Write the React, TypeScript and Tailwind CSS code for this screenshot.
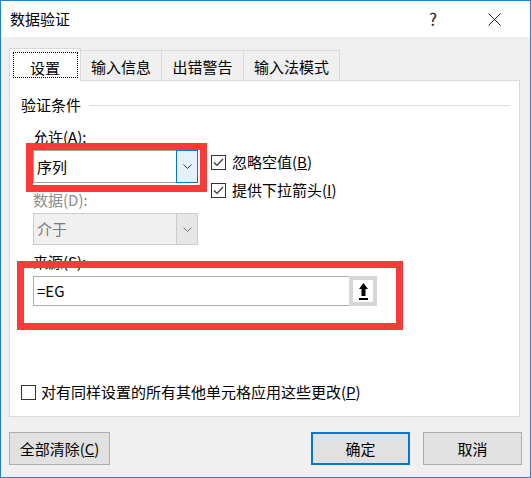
import React from "react"

const font = "font-['Noto_Sans_CJK_SC','Noto_Sans',sans-serif]"

function Check({ checked }: { checked: boolean }) {
  return (
    <span className="flex h-[15px] w-[15px] shrink-0 items-center justify-center border border-[#333333] bg-white">
      {checked && (
        <svg width="11" height="9" viewBox="0 0 11 9">
          <path d="M1 4.5 L4 7.5 L10 1" fill="none" stroke="#333333" strokeWidth="1.2" />
        </svg>
      )}
    </span>
  )
}

function Chevron({ color }: { color: string }) {
  return (
    <svg width="9" height="5" viewBox="0 0 9 5">
      <path d="M0.5 0.5 L4.5 4.5 L8.5 0.5" fill="none" stroke={color} strokeWidth="1" />
    </svg>
  )
}

export default function App() {
  return (
    <div className={`flex h-[478px] w-[531px] flex-col border border-[#1f84d6] bg-[#f0f0f0] text-[15px] leading-[20px] text-black ${font}`}>
      {/* title bar */}
      <div className="flex h-[36px] shrink-0 items-center bg-white pl-[9px]">
        <span>数据验证</span>
        <span className="ml-auto mr-[51px] text-[17px] text-[#222]">?</span>
        <svg className="mr-[29px]" width="13" height="13" viewBox="0 0 13 13">
          <path d="M0.5 0.5 L12.5 12.5 M12.5 0.5 L0.5 12.5" stroke="#222" strokeWidth="1" />
        </svg>
      </div>

      <div className="flex flex-1 flex-col pl-[8px] pt-[11px]">
        {/* tabs */}
        <div className="flex h-[32px] items-end">
          <div className="relative z-10 -mb-px flex h-[33px] w-[72px] items-center justify-center border-x border-t border-[#d9d9d9] bg-white pt-[5px]">
            <div className="absolute left-[3px] right-[2px] top-[3px] h-[26px] border border-dotted border-black" />
            设置
          </div>
          <div className="flex h-[30px] w-[81px] items-center justify-center border-r border-t border-[#d9d9d9] pt-[3px]">输入信息</div>
          <div className="flex h-[30px] w-[82px] items-center justify-center border-r border-t border-[#d9d9d9] pt-[3px]">出错警告</div>
          <div className="flex h-[30px] w-[96px] items-center justify-center border-r border-t border-[#d9d9d9] pt-[3px]">输入法模式</div>
        </div>

        {/* panel */}
        <div className="relative flex h-[337px] w-[511px] flex-col border border-[#d9d9d9] bg-white">
          <div className="mt-[14px] flex h-[20px] items-center pl-[11px] pr-[9px]">
            <span>验证条件</span>
            <div className="ml-[8px] h-px flex-1 bg-[#dcdcdc]" />
          </div>

          <div className="pl-[23px]">
            <div className="mt-[12px] h-[20px]">
              允许(<span className="underline">A</span>):
            </div>

            <div className="mt-[3px] flex h-[33px]">
              <div className="flex h-[33px] w-[165px] border border-[#a3a3a3] bg-white">
                <div className="flex flex-1 items-center pl-[3px]">序列</div>
                <div className="-m-px flex w-[22px] items-center justify-center border border-[#0078d7] bg-[#e5f1fb]">
                  <Chevron color="#333" />
                </div>
              </div>
              <div className="ml-[13px] mt-[2px] flex flex-col gap-[8px]">
                <div className="flex h-[20px] items-center gap-[6px]">
                  <Check checked />
                  <span>忽略空值(<span className="underline">B</span>)</span>
                </div>
                <div className="flex h-[20px] items-center gap-[6px]">
                  <Check checked />
                  <span>提供下拉箭头(<span className="underline">I</span>)</span>
                </div>
              </div>
            </div>

            <div className="mt-[7px] h-[20px] text-[#8d8d8d]">数据(D):</div>
            <div className="mt-[3px] flex h-[32px] w-[165px] border border-[#cccccc] bg-[#f0f0f0]">
              <div className="flex flex-1 items-center pl-[3px] text-[#7a7a7a]">介于</div>
              <div className="flex w-[21px] items-center justify-center border-l border-[#cccccc] bg-[#e6e6e6]">
                <Chevron color="#777" />
              </div>
            </div>

            <div className="mt-[7px] h-[20px]">来源(S):</div>
            <div className="mt-[4px] flex h-[30px] w-[344px] border border-[#adadad] bg-white">
              <div className="flex flex-1 items-center pl-[3px]">=EG</div>
              <div className="-my-px -mr-px flex w-[28px] items-center justify-center border-[4px] border-[#d6d6d6] bg-white">
                <svg width="9" height="17" viewBox="0 0 9 17">
                  <path d="M4.5 0 L9 6 L6.5 6 L6.5 13 L2.5 13 L2.5 6 L0 6 Z" fill="#000" />
                  <rect x="0" y="15" width="9" height="2" fill="#000" />
                </svg>
              </div>
            </div>
          </div>

          <div className="ml-[11px] mt-[76px] flex h-[20px] items-center gap-[5px]">
            <Check checked={false} />
            <span>对有同样设置的所有其他单元格应用这些更改(<span className="underline">P</span>)</span>
          </div>

          {/* red annotation boxes */}
          <div className="absolute left-[16px] top-[62px] h-[49px] w-[181px] border-[7px] border-[#fc3a3a]" />
          <div className="absolute left-[7px] top-[180px] h-[69px] w-[386px] border-[7px] border-[#fc3a3a]" />
        </div>

        {/* buttons */}
        <div className="mt-[15px] flex h-[33px] pr-[8px]">
          <button className="h-[33px] w-[101px] border border-[#adadad] bg-[#e1e1e1]">
            全部清除(<span className="underline">C</span>)
          </button>
          <button className="ml-auto h-[33px] w-[99px] border-2 border-[#0078d7] bg-[#e1e1e1]">确定</button>
          <button className="ml-[13px] h-[33px] w-[99px] border border-[#adadad] bg-[#e1e1e1]">取消</button>
        </div>
      </div>
    </div>
  )
}
